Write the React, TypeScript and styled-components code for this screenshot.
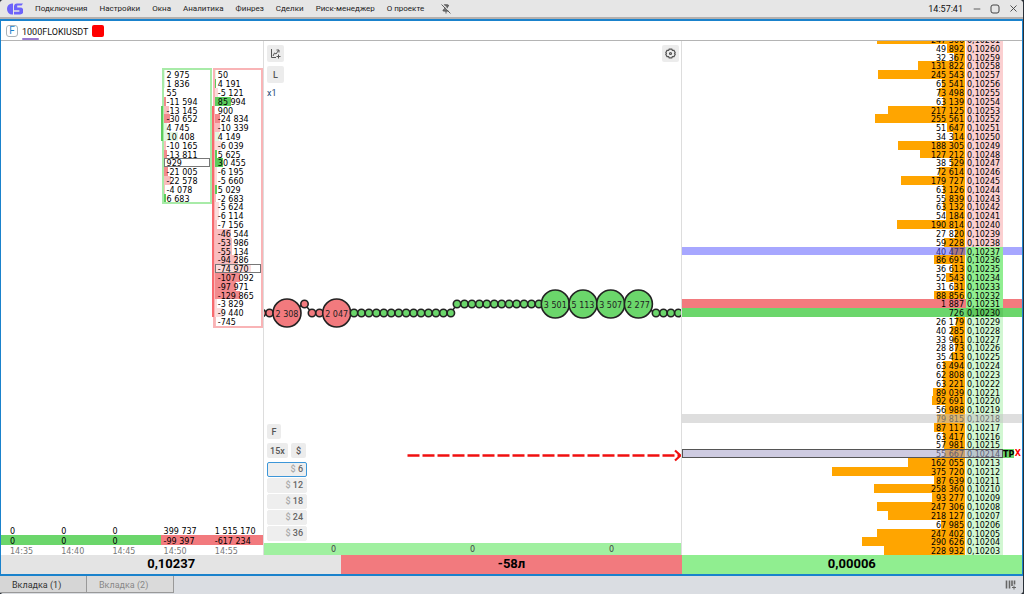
import React from "react";
import styled, { createGlobalStyle, css } from "styled-components";
import { PinOff, Minus, X } from "lucide-react";

const GREEN = "#6bd66b";
const RED = "#f27a7e";
const LIGHT_GREEN = "#90ee90";

const Global = createGlobalStyle`
  * { box-sizing: border-box; }
  body { margin: 0; background: #2b3138; font-family: Roboto, "Liberation Sans", sans-serif; }
  button { font: inherit; color: inherit; border: 0; padding: 0; background: none; }
  table, tbody, tr, td, th { padding: 0; border-spacing: 0; font-weight: normal; text-align: left; }
`;

const Window = styled.div`
  display: flex;
  flex-direction: column;
  height: 100vh;
  min-height: 560px;
  margin-right: 1px;
  background: #e6e6e6;
  border-radius: 4px;
  overflow: hidden;
`;

const TitleBar = styled.header`
  display: flex;
  align-items: center;
  flex: 0 0 19px;
  padding: 0 4px 0 7px;
  border-bottom: 2px solid #b4b0ae;
  background: #e6e6e6;
  color: #222;
  font-size: 8px;
  line-height: 16px;
`;

const Menu = styled.nav`
  display: flex;
  gap: 12px;
  margin-left: 12px;
  margin-right: 17px;
`;

const MenuItem = styled.button`
  white-space: nowrap;
`;

const IconButton = styled.button`
  display: flex;
  align-items: center;
  justify-content: center;
  color: #444;
`;

const Clock = styled.time`
  margin-left: auto;
  font-size: 9px;
  color: #111;
`;

const WindowButtons = styled.div`
  display: flex;
  gap: 8px;
  margin-left: 9px;
`;

const Main = styled.main`
  display: flex;
  flex-direction: column;
  flex: 1;
  min-height: 0;
  border: solid #1a82cc;
  border-width: 2px 1px 2px 1px;
  background: #fff;
`;

const SymbolBar = styled.div`
  display: flex;
  align-items: center;
  gap: 4px;
  flex: 0 0 20px;
  padding-left: 5px;
  border-bottom: 1px solid #b4b4b4;
  color: #222;
  font-size: 10px;
`;

const Exchange = styled.span`
  width: 12px;
  height: 12px;
  border: 1px solid #aab2b8;
  border-radius: 3px;
  color: #1a82cc;
  line-height: 10px;
  text-align: center;
`;

const SymbolName = styled.h1`
  margin: 0;
  padding-top: 4px;
  font-size: 9px;
  font-weight: 400;
  line-height: 12px;
  color: #111;
  &::after {
    content: "";
    display: block;
    width: 17px;
    height: 2px;
    border-radius: 1px;
    background: #9878d0;
  }
`;

const ColorMark = styled.button`
  width: 12px;
  height: 12px;
  border-radius: 2px;
  background: #f00;
`;

const Panels = styled.div`
  display: grid;
  grid-template-columns: 263fr 418fr 340fr;
  grid-template-rows: minmax(0, 1fr);
  flex: 1;
  min-height: 0;
`;

const Panel = styled.section`
  display: flex;
  min-width: 0;
  overflow: hidden;
  border-right: 1px solid #ddd;
  &:last-child { border-right: 0; }
`;

const priceRows = css`
  display: grid;
  flex: 1;
  min-width: 0;
  margin-top: -6px;
  grid-template-rows: repeat(59, minmax(0, 1fr));
  font-family: "DejaVu Sans", sans-serif;
  font-size: 8px;
  line-height: 11px;
  color: #000;
`;

/* Clusters */

const ClusterGrid = styled.div`
  ${priceRows}
  grid-template-columns: 6px repeat(5, 1fr);
`;

const Cluster = styled.ol<{ $col: number; $rows: number; $edge: string }>`
  display: grid;
  grid-column: ${(p) => p.$col};
  grid-row: 5 / span ${(p) => p.$rows};
  grid-auto-rows: minmax(0, 1fr);
  margin: 0 2px 0 3px;
  padding: 0;
  list-style: none;
  outline: 2px solid ${(p) => p.$edge};
`;

const Cell = styled.li<{ $bar: number; $color: string; $framed: boolean }>`
  display: block;
  padding-left: 3px;
  background: linear-gradient(${(p) => p.$color} 0 0) 0 0 / ${(p) => p.$bar}px 100% no-repeat;
  white-space: nowrap;
  ${(p) => p.$framed && css`box-shadow: inset 0 0 0 1px #777;`}
`;

const BodyRange = styled.span<{ $col: number; $span: number; $color: string }>`
  grid-column: ${(p) => p.$col};
  grid-row: 9 / span ${(p) => p.$span};
  width: 2px;
  background: ${(p) => p.$color};
  z-index: 1;
`;

const Totals = styled.table`
  display: grid;
  grid-column: 1 / -1;
  grid-row: 56 / 60;
  align-self: end;
  grid-auto-rows: 10px;
  line-height: 13px;
  tbody { display: contents; }
`;

const TotalsRow = styled.tr<{ $kind?: "delta" | "time" }>`
  display: grid;
  grid-template-columns: repeat(5, 1fr);
  grid-template-rows: minmax(0, 1fr);
  padding-left: 6px;
  ${(p) => p.$kind === "delta" && css`background: ${GREEN};`}
  ${(p) => p.$kind === "time" && css`color: #777;`}
`;

const TotalsCell = styled.td<{ $down?: boolean }>`
  padding-left: 3px;
  white-space: nowrap;
  ${(p) => p.$down && css`background: ${RED};`}
`;

/* Trades */

const Trades = styled.div`
  display: flex;
  flex-direction: column;
  flex: 1;
  min-width: 0;
`;

const TradesBody = styled.div`
  position: relative;
  display: flex;
  flex-direction: column;
  justify-content: space-between;
  flex: 1;
  min-height: 0;
  padding: 4px 2px 2px 3px;
`;

const TradesChart = styled.svg`
  position: absolute;
  inset: 0;
  width: 100%;
  height: 100%;
  pointer-events: none;
  font-family: "DejaVu Sans", sans-serif;
  font-size: 8px;
`;

const TopTools = styled.div`
  display: flex;
  justify-content: space-between;
  align-items: flex-start;
`;

const ToolStack = styled.div`
  display: flex;
  flex-direction: column;
  align-items: flex-start;
  gap: 4px;
`;

const ToolButton = styled.button<{ $width: number; $height: number }>`
  display: flex;
  align-items: center;
  justify-content: center;
  width: ${(p) => p.$width}px;
  height: ${(p) => p.$height}px;
  border-radius: 2px;
  background: #ececec;
  color: #555;
  font-size: 9px;
  font-weight: 500;
`;

const Multiplier = styled.span`
  color: #1d4a78;
  font-size: 9px;
  line-height: 12px;
`;

const ToolRow = styled.div`
  display: flex;
  gap: 3px;
`;

const Presets = styled.div`
  display: flex;
  flex-direction: column;
  gap: 1px;
`;

const Preset = styled.button<{ $active: boolean }>`
  width: 40px;
  height: 15px;
  padding-right: 3px;
  border: 1px solid ${(p) => (p.$active ? "#3c96d8" : "#eee")};
  border-radius: 2px;
  background: #eee;
  color: #666;
  font-size: 9px;
  font-weight: 500;
  line-height: 13px;
  text-align: right;
  span { color: #aaa; }
`;

const TradeCounts = styled.div`
  display: grid;
  grid-template-columns: repeat(3, 1fr);
  grid-template-rows: minmax(0, 1fr);
  flex: 0 0 12px;
  min-height: 0;
  background: #a0f0a0;
  color: #444;
  font-family: "DejaVu Sans", sans-serif;
  font-size: 8px;
  line-height: 14px;
  text-align: center;
`;

/* Order book */

type RowKind = "ask" | "mid" | "bid" | "last" | "bestAsk" | "bestBid" | "hover" | "order";

const rowFill: Partial<Record<RowKind, string>> = { bestAsk: RED, bestBid: GREEN };
const rowVeil: Partial<Record<RowKind, string>> = {
  last: "rgba(80, 80, 255, 0.5)",
  hover: "rgba(195, 195, 195, 0.55)",
  order: "rgba(165, 160, 200, 0.55)",
};
const priceFill: Record<RowKind, string> = {
  ask: "#fbcfd0",
  mid: LIGHT_GREEN,
  last: LIGHT_GREEN,
  bestAsk: LIGHT_GREEN,
  bestBid: "#5fc95f",
  bid: "#d2f7d2",
  hover: "#d2f7d2",
  order: "#d2f7d2",
};

const Book = styled.table`
  ${priceRows}
  tbody { display: contents; }
`;

const Level = styled.tr<{ $kind: RowKind }>`
  position: relative;
  display: grid;
  grid-template-columns: 1fr 37px 19px;
  grid-template-rows: minmax(0, 1fr);
  background: ${(p) => rowFill[p.$kind] ?? "none"};
  ${(p) =>
    rowVeil[p.$kind] &&
    css`
      &::after {
        content: "";
        position: absolute;
        inset: 0;
        right: ${p.$kind === "order" ? "19px" : "0"};
        background: ${rowVeil[p.$kind]};
        border: ${p.$kind === "order" ? "1px solid #555" : "0"};
      }
    `}
`;

const Volume = styled.td`
  display: flex;
  justify-content: flex-end;
  position: relative;
  margin-right: 1px;
  padding-right: 1px;
`;

const VolumeBar = styled.span`
  position: absolute;
  top: 0;
  right: 0;
  bottom: 0;
  background: #ffa500;
`;

const VolumeText = styled.span`
  position: relative;
`;

const Price = styled.td<{ $kind: RowKind }>`
  position: relative;
  z-index: ${(p) => (p.$kind === "last" ? 1 : 0)};
  padding-left: 1px;
  background: ${(p) => priceFill[p.$kind]};
`;

const OrderTag = styled.td`
  display: flex;
  justify-content: space-between;
  align-items: stretch;
  padding-right: 1px;
  font-weight: bold;
  white-space: nowrap;
`;

const TakeProfit = styled.span`
  background: ${GREEN};
`;

const CancelOrder = styled.button`
  color: #f00;
  line-height: 10px;
`;

/* Footer */

const Summary = styled.div`
  display: grid;
  grid-template-columns: repeat(3, 1fr);
  flex: 0 0 19px;
  font-size: 13px;
  font-weight: 700;
  line-height: 18px;
  text-align: center;
  color: #000;
`;

const SummaryCell = styled.div<{ $color: string }>`
  background: ${(p) => p.$color};
`;

const TabBar = styled.footer`
  display: flex;
  align-items: stretch;
  flex: 0 0 18px;
  padding-bottom: 1px;
  background: #dadde2;
`;

const Tab = styled.button<{ $active: boolean }>`
  width: 87px;
  padding: 2px 0 0 12px;
  border-right: 1px solid #999;
  border-bottom: 1px solid #999;
  background: ${(p) => (p.$active ? "#d6d6d6" : "#dadada")};
  color: ${(p) => (p.$active ? "#333" : "#888")};
  font-size: 9px;
  text-align: left;
`;

const LayoutButton = styled(IconButton)`
  margin-left: auto;
  margin-right: 6px;
`;

type ClusterRow = [text: string, bar: number, color: string];

const P1 = "#fbdcdc";
const P2 = "#f9bcbe";
const P3 = "#f28a8d";
const G1 = "#e2f7e2";
const G3 = "#5ccc5c";

const clusterA: ClusterRow[] = [
  ["2 975", 1, G1], ["1 836", 1, G1], ["55", 0, G1], ["-11 594", 2, P3], ["-13 145", 5, P2],
  ["-30 652", 6, P3], ["4 745", 3, G1], ["10 408", 14, G1], ["-10 165", 2, P2], ["-13 811", 3, P3],
  ["929", 0, G1], ["-21 005", 4, P3], ["-22 578", 7, P2], ["-4 078", 1, P2], ["6 683", 2, G3],
];

const clusterB: ClusterRow[] = [
  ["50", 1, G1], ["4 191", 1, G3], ["-5 121", 3, P1], ["85 994", 16, G3], ["900", 0, G1],
  ["-24 834", 5, P3], ["-10 339", 5, P2], ["4 149", 4, G1], ["-6 039", 6, P1], ["5 625", 2, G3],
  ["30 455", 8, G3], ["-6 195", 2, P1], ["-5 660", 2, P1], ["5 029", 2, G3], ["-2 683", 1, P2],
  ["-5 624", 4, P1], ["-6 114", 4, P1], ["-7 156", 2, P2], ["-46 544", 16, P2], ["-53 986", 17, P2],
  ["-55 134", 17, P2], ["-94 286", 23, P2], ["-74 970", 36, P1], ["-107 092", 25, P3],
  ["-97 971", 21, P3], ["-129 865", 25, P3], ["-3 829", 2, P1], ["-9 440", 8, P1], ["-745", 1, P2],
];

const totals = ["0", "0", "0", "399 737", "1 515 170"];
const deltas = ["0", "0", "0", "-99 397", "-617 234"];
const times = ["14:35", "14:40", "14:45", "14:50", "14:55"];

const TOP_PRICE = 10261;
const volumes = [
  247366, 49892, 32367, 131822, 245543, 65541, 73498, 63139, 217125, 255561, 51647, 34314, 188305,
  127212, 38529, 72614, 179727, 63126, 55839, 63132, 54184, 190814, 27820, 59228, 40477, 86691,
  36613, 52543, 31631, 88856, 1887, 726, 26179, 40285, 33961, 28873, 35413, 63494, 62808, 63221,
  89039, 92691, 56988, 79815, 87117, 63417, 57981, 55667, 162055, 375720, 87639, 258360, 93277,
  247306, 218127, 67985, 247402, 290626, 228932,
];
const MAX_VOLUME = 375720;
const MAX_BAR_SHARE = 47;

const kindOf = (price: number): RowKind => {
  if (price === 10237) return "last";
  if (price === 10231) return "bestAsk";
  if (price === 10230) return "bestBid";
  if (price === 10218) return "hover";
  if (price === 10214) return "order";
  if (price > 10237) return "ask";
  return price > 10231 ? "mid" : "bid";
};

const grouped = (n: number) => String(n).replace(/\B(?=(\d{3})+$)/g, " ");

type Trade = { x: number; y: number; up: boolean; label?: string };
const HIGH = 263;
const LOW = 272;
const run = (start: number, count: number, y: number): Trade[] =>
  Array.from({ length: count }, (_, i) => ({ x: start + i * 7.45, y, up: true }));

const trades: Trade[] = [
  { x: -2, y: LOW, up: false },
  { x: 5.5, y: LOW, up: false },
  { x: 23, y: LOW, up: false, label: "2 308" },
  { x: 40.5, y: HIGH, up: false },
  { x: 48, y: LOW, up: false },
  { x: 55.5, y: LOW, up: false },
  { x: 72.7, y: LOW, up: false, label: "2 047" },
  ...run(90, 14, LOW),
  ...run(193, 12, HIGH),
  { x: 291.3, y: HIGH, up: true, label: "3 501" },
  { x: 319, y: HIGH, up: true, label: "5 113" },
  { x: 346.7, y: HIGH, up: true, label: "3 507" },
  { x: 374.4, y: HIGH, up: true, label: "2 277" },
  ...run(392, 4, LOW),
];

const menu = ["Подключения", "Настройки", "Окна", "Аналитика", "Финрез", "Сделки", "Риск-менеджер", "О проекте"];

const Logo = () => (
  <svg width="16" height="12" viewBox="0 0 16 12" fill="#6c63fa" aria-hidden="true">
    <path d="M5 0.5H6V11.5H5A5 5.5 0 0 1 5 0.5Z" />
    <path d="M7 3.4A3 3 0 0 1 10 0.5H16L14.6 2.6H10.2V4.6H13A3 3 0 0 1 13 11.5H7V8.8H12.4V7.2H7Z" />
  </svg>
);

const ChartIcon = () => (
  <svg width="11" height="11" viewBox="0 0 11 11" fill="none" stroke="#555" strokeWidth="1" aria-hidden="true">
    <path d="M1.5 1V9.5H6M3 8L4.5 5L6 6L8.5 2.5M6.5 2H9V4.5M8.5 6.5V10.5M6.5 8.5H10.5" />
  </svg>
);

const GearIcon = () => (
  <svg width="11" height="11" viewBox="0 0 11 11" fill="none" stroke="#555" strokeWidth="1.2" aria-hidden="true">
    <path d="M4.2 1.2H6.8L7.4 2.3L9 2.4L10.2 4.6L9.6 5.5L10.2 6.4L9 8.6L7.4 8.7L6.8 9.8H4.2L3.6 8.7L2 8.6L0.8 6.4L1.4 5.5L0.8 4.6L2 2.4L3.6 2.3Z" />
    <circle cx="5.5" cy="5.5" r="1" />
  </svg>
);

const LayoutIcon = () => (
  <svg width="12" height="10" viewBox="0 0 12 10" fill="none" stroke="#666" aria-hidden="true">
    <path d="M1.5 0.5V8.5M4.5 0.5V8.5M7 0.5V6M9.5 0.5V4.5" strokeWidth="1.6" />
    <path d="M9 5.5V9.5M7 7.5H11" />
  </svg>
);

const ClusterColumn = ({ rows, col, edge, framed }: { rows: ClusterRow[]; col: number; edge: string; framed: string }) => (
  <Cluster $col={col} $rows={rows.length} $edge={edge}>
    {rows.map(([text, bar, color], i) => (
      <Cell key={i} $bar={bar} $color={color} $framed={text === framed}>{text}</Cell>
    ))}
  </Cluster>
);

export default function App() {
  return (
    <>
      <Global />
      <Window>
        <TitleBar>
          <Logo />
          <Menu>
            {menu.map((item) => <MenuItem key={item}>{item}</MenuItem>)}
          </Menu>
          <IconButton aria-label="Открепить"><PinOff size={10} fill="#777" /></IconButton>
          <Clock>14:57:41</Clock>
          <WindowButtons>
            <IconButton aria-label="Свернуть"><Minus size={10} /></IconButton>
            <IconButton aria-label="Развернуть">
              <svg width="10" height="10" viewBox="0 0 10 10" fill="none" stroke="#444"><rect x="1" y="1" width="8" height="8" rx="2" /></svg>
            </IconButton>
            <IconButton aria-label="Закрыть"><X size={11} /></IconButton>
          </WindowButtons>
        </TitleBar>

        <Main>
          <SymbolBar>
            <Exchange>F</Exchange>
            <SymbolName>1000FLOKIUSDT</SymbolName>
            <ColorMark aria-label="Цвет группы" />
          </SymbolBar>

          <Panels>
            <Panel>
              <ClusterGrid>
                <BodyRange $col={5} $span={4} $color="#5ccc5c" />
                <BodyRange $col={6} $span={24} $color="#f86a6e" />
                <ClusterColumn rows={clusterA} col={5} edge="#a8eba8" framed="929" />
                <ClusterColumn rows={clusterB} col={6} edge="#f9b4b6" framed="-74 970" />
                <Totals>
                  <tbody>
                    <TotalsRow>
                      {totals.map((t, i) => <TotalsCell key={i}>{t}</TotalsCell>)}
                    </TotalsRow>
                    <TotalsRow $kind="delta">
                      {deltas.map((t, i) => <TotalsCell key={i} $down={t.startsWith("-")}>{t}</TotalsCell>)}
                    </TotalsRow>
                    <TotalsRow $kind="time">
                      {times.map((t) => <TotalsCell key={t}>{t}</TotalsCell>)}
                    </TotalsRow>
                  </tbody>
                </Totals>
              </ClusterGrid>
            </Panel>

            <Panel>
              <Trades>
                <TradesBody>
                  <TradesChart viewBox="0 0 417 502">
                    <polyline points={trades.map((t) => `${t.x},${t.y}`).join(" ")} fill="none" stroke="#222" strokeWidth="1.5" />
                    {trades.map((t, i) => (
                      <g key={i}>
                        <circle cx={t.x} cy={t.y} r={t.label ? 14 : 3.7} fill={t.up ? GREEN : RED} stroke="#222" strokeWidth="1.6" />
                        {t.label && <text x={t.x} y={t.y + 4} textAnchor="middle" fill="#222">{t.label}</text>}
                      </g>
                    ))}
                    <path d="M143.5 414.5H415" stroke="#f01010" strokeWidth="2.4" strokeDasharray="12 3" fill="none" />
                    <path d="M411 409.5L416.5 414.5L411 419.5" stroke="#f01010" strokeWidth="2.2" fill="none" />
                  </TradesChart>
                  <TopTools>
                    <ToolStack>
                      <ToolButton $width={17} $height={17} aria-label="График"><ChartIcon /></ToolButton>
                      <ToolButton $width={17} $height={17}>L</ToolButton>
                      <Multiplier>x1</Multiplier>
                    </ToolStack>
                    <ToolButton $width={17} $height={17} aria-label="Настройки стакана"><GearIcon /></ToolButton>
                  </TopTools>
                  <ToolStack>
                    <ToolButton $width={14} $height={15}>F</ToolButton>
                    <ToolRow>
                      <ToolButton $width={21} $height={15}>15x</ToolButton>
                      <ToolButton $width={15} $height={15}>$</ToolButton>
                    </ToolRow>
                    <Presets>
                      {[6, 12, 18, 24, 36].map((n) => (
                        <Preset key={n} $active={n === 6} aria-pressed={n === 6}><span>$</span> {n}</Preset>
                      ))}
                    </Presets>
                  </ToolStack>
                </TradesBody>
                <TradeCounts>
                  <span>0</span><span>0</span><span>0</span>
                </TradeCounts>
              </Trades>
            </Panel>

            <Panel>
              <Book>
                <tbody>
                  {volumes.map((volume, i) => {
                    const price = TOP_PRICE - i;
                    const kind = kindOf(price);
                    const hasBar = kind !== "bestAsk" && kind !== "bestBid";
                    return (
                      <Level key={price} $kind={kind}>
                        <Volume>
                          {hasBar && <VolumeBar style={{ width: `${(volume / MAX_VOLUME) * MAX_BAR_SHARE}%` }} />}
                          <VolumeText>{grouped(volume)}</VolumeText>
                        </Volume>
                        <Price $kind={kind}>0,{price}</Price>
                        {kind === "order" && (
                          <OrderTag>
                            <TakeProfit>TP</TakeProfit>
                            <CancelOrder aria-label="Снять заявку">X</CancelOrder>
                          </OrderTag>
                        )}
                      </Level>
                    );
                  })}
                </tbody>
              </Book>
            </Panel>
          </Panels>

          <Summary>
            <SummaryCell $color="#e4e4e4">0,10237</SummaryCell>
            <SummaryCell $color={RED}>-58л</SummaryCell>
            <SummaryCell $color={LIGHT_GREEN}>0,00006</SummaryCell>
          </Summary>
        </Main>

        <TabBar>
          <Tab $active>Вкладка (1)</Tab>
          <Tab $active={false}>Вкладка (2)</Tab>
          <LayoutButton aria-label="Добавить панель"><LayoutIcon /></LayoutButton>
        </TabBar>
      </Window>
    </>
  );
}
